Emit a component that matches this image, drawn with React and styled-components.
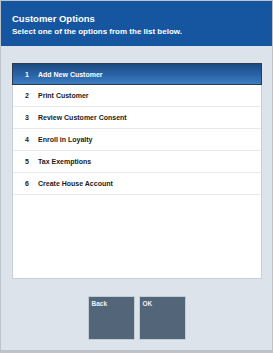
import React from "react";
import styled, { createGlobalStyle } from "styled-components";

const options = [
  "Add New Customer",
  "Print Customer",
  "Review Customer Consent",
  "Enroll in Loyalty",
  "Tax Exemptions",
  "Create House Account"
];

const GlobalStyle = createGlobalStyle`
  body {
    margin: 0;
    font-family: "Liberation Sans", Arial, sans-serif;
  }
`;

const Frame = styled.div`
  width: 273px;
  height: 353px;
  box-sizing: border-box;
  border: 1px solid #bcc3ca;
  border-bottom-width: 3px;
  background-color: #dce3ea;
  display: flex;
  flex-direction: column;
`;

const Header = styled.div`
  height: 45px;
  box-sizing: border-box;
  padding: 12px 11px 0;
  background-color: #1656a0;
  color: white;
`;

const Title = styled.h1`
  margin: 0;
  font-size: 9.5px;
  font-weight: bold;
  line-height: 11px;
`;

const Subtitle = styled.p`
  margin: 3px 0 0;
  font-size: 8px;
  font-weight: bold;
  line-height: 9px;
`;

const Body = styled.div`
  flex: 1;
  display: flex;
  flex-direction: column;
  align-items: center;
  padding-top: 17px;
`;

const ListPanel = styled.ul`
  width: 250px;
  height: 216px;
  box-sizing: border-box;
  margin: 0 0 0 1px;
  padding: 0;
  list-style: none;
  background-color: white;
  border: 1px solid #c7ced5;
`;

const Row = styled.li`
  height: 22px;
  box-sizing: border-box;
  display: flex;
  align-items: center;
  padding-left: 12px;
  font-size: 7px;
  font-weight: bold;
  color: ${props => (props.$selected ? "white" : "#1a1a1a")};
  background: ${props =>
    props.$selected
      ? "linear-gradient(to bottom, #1b4a82 0%, #2a64a6 55%, #3c7dc2 100%)"
      : "white"};
  border: ${props => (props.$selected ? "1px solid #2b3c52" : "none")};
  border-bottom: 1px solid ${props => (props.$selected ? "#2b3c52" : "#e7eaee")};
  margin: ${props => (props.$selected ? "-1px -1px 0" : "0")};
`;

const Number = styled.span`
  width: 13px;
`;

const ButtonBar = styled.div`
  display: flex;
  gap: 4px;
  margin-top: 17px;
`;

const Button = styled.button`
  width: 47px;
  height: 44px;
  padding: 3px 3px;
  border: 1px solid #c3ccd5;
  background-color: #526579;
  color: #eef2f5;
  font-family: inherit;
  font-size: 6.5px;
  font-weight: bold;
  text-align: left;
  display: flex;
  align-items: flex-start;
`;

const App = () => (
  <>
    <GlobalStyle />
    <Frame>
      <Header>
        <Title>Customer Options</Title>
        <Subtitle>Select one of the options from the list below.</Subtitle>
      </Header>
      <Body>
        <ListPanel>
          {options.map((name, i) => (
            <Row key={name} $selected={i === 0}>
              <Number>{i + 1}</Number>
              {name}
            </Row>
          ))}
        </ListPanel>
        <ButtonBar>
          <Button>Back</Button>
          <Button>OK</Button>
        </ButtonBar>
      </Body>
    </Frame>
  </>
);

export default App;
